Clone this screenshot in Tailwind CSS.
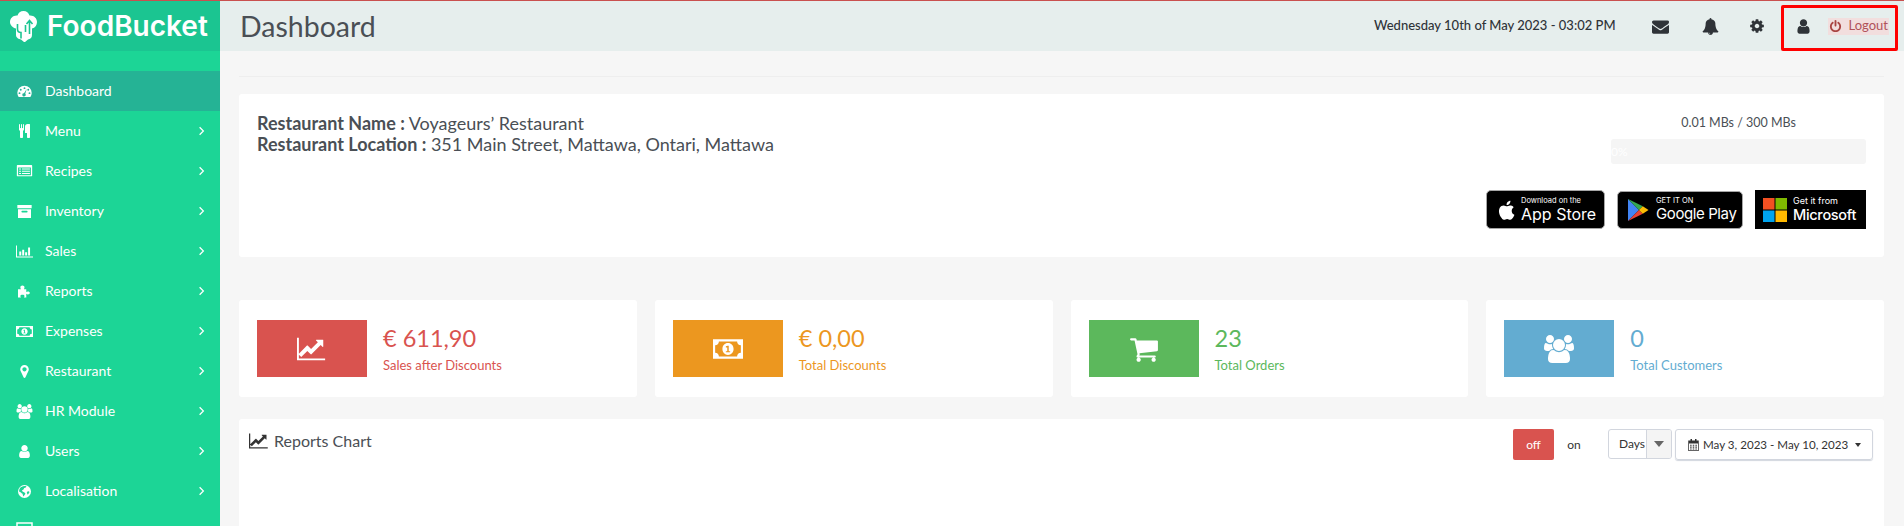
<!DOCTYPE html>
<html lang="en">
<head>
    <meta charset="UTF-8">
    <meta name="viewport" content="width=device-width, initial-scale=1.0">
    <title>FoodBucket - Dashboard</title>
    <script src="https://cdn.jsdelivr.net/npm/@tailwindcss/browser@4"></script>
</head>
<body class="h-[526px] overflow-hidden bg-[#f6f6f6] font-[family-name:Lato,sans-serif] text-[#4a4f55]">
<svg class="hidden">
    <symbol id="i-angle" viewBox="0 0 10 16"><path d="M2 2l6 6-6 6" fill="none" stroke="currentColor" stroke-width="2"/></symbol>
    <symbol id="i-gauge" viewBox="0 0 24 20"><path fill="currentColor" fill-rule="evenodd" d="M12 1a11.500 11.500 0 0 1 11.500 11.500c0 2.500-.8 4.800-2.100 6.500H2.600A11 11 0 0 1 .5 12.500 11.500 11.500 0 0 1 12 1zM12 3.500a1.500 1.500 0 1 0 0 3 1.500 1.500 0 0 0 0-3zM6 6a1.500 1.500 0 1 0 0 3 1.500 1.500 0 0 0 0-3zM18 6a1.500 1.500 0 1 0 0 3 1.500 1.500 0 0 0 0-3zM4 11.500a1.500 1.500 0 1 0 0 3 1.500 1.500 0 0 0 0-3zM20 11.500a1.500 1.500 0 1 0 0 3 1.500 1.500 0 0 0 0-3zM15.500 6.500l-4.300 6.600a2.600 2.600 0 1 0 2 1z"/></symbol>
    <symbol id="i-cutlery" viewBox="0 0 1408 1792"><path fill="currentColor" d="M640 64v640q0 61-35.500 111t-92.500 70v779q0 52-38 90t-90 38h-128q-52 0-90-38t-38-90v-779q-57-20-92.500-70t-35.500-111v-640q0-26 19-45t45-19 45 19 19 45v416q0 26 19 45t45 19 45-19 19-45v-416q0-26 19-45t45-19 45 19 19 45v416q0 26 19 45t45 19 45-19 19-45v-416q0-26 19-45t45-19 45 19 19 45zm768 0v1600q0 52-38 90t-90 38h-128q-52 0-90-38t-38-90v-512h-224q-13 0-22.500-9.500t-9.500-22.500v-800q0-132 94-226t226-94h256q26 0 45 19t19 45z"/></symbol>
    <symbol id="i-list" viewBox="0 0 24 18"><path fill="currentColor" fill-rule="evenodd" d="M1 0h22a1 1 0 0 1 1 1v16a1 1 0 0 1-1 1H1a1 1 0 0 1-1-1V1a1 1 0 0 1 1-1zM2 4v12h20V4zM3.500 5.500h3v1.500h-3zM8 5.500h12.500v1.500H8zM3.500 9h3v1.500h-3zM8 9h12.500v1.500H8zM3.500 12.500h3V14h-3zM8 12.500h12.500V14H8z"/></symbol>
    <symbol id="i-box" viewBox="0 0 22 20"><path fill="currentColor" fill-rule="evenodd" d="M0 0h22v5H0zM1 6.500h20V20H1zM7.500 9a1 1 0 0 0 0 2.500h7a1 1 0 0 0 0-2.500z"/></symbol>
    <symbol id="i-bars" viewBox="0 0 26 18"><path fill="currentColor" d="M0 0h1.500v16.500H26V18H0zM5 9h3v6H5zM9.500 6.500h3V15h-3zM14 10h3v5h-3zM18.500 3h3v12h-3z"/></symbol>
    <symbol id="i-puzzle" viewBox="0 0 24 22"><path fill="currentColor" d="M1 7h5C5.300 6 5 5 5 4c0-1.700 1.500-3 3.500-3S12 2.300 12 4c0 1-.3 2-1 3h4v5c1-.7 1.800-1 2.700-1 1.800 0 3.300 1 3.300 2.500S19.500 16 17.700 16c-.9 0-1.700-.3-2.700-1v6h-4c.6-.8 1-1.500 1-2.300 0-1.300-1.500-2.200-3.500-2.200s-3.500.9-3.500 2.200c0 .8.400 1.500 1 2.300H1z"/></symbol>
    <symbol id="i-money" viewBox="0 0 28 18"><path fill="currentColor" fill-rule="evenodd" d="M0 0h28v18H0zM5.500 2c0 2-1.500 3.500-3.500 3.500v7c2 0 3.500 1.500 3.500 3.500h17c0-2 1.500-3.500 3.500-3.500v-7c-2 0-3.500-1.500-3.500-3.500zM14 3.500c3 0 5.200 2.500 5.200 5.500S17 14.500 14 14.500 8.800 12 8.800 9 11 3.500 14 3.500zM12 6.500v1h1.300V11H12v1h4v-1h-1.300V6h-1z"/></symbol>
    <symbol id="i-marker" viewBox="0 0 1792 1792"><path fill="currentColor" d="M1152 640q0-106-75-181t-181-75-181 75-75 181 75 181 181 75 181-75 75-181zm256 0q0 109-33 179l-364 774q-16 33-47.500 52t-67.500 19-67.500-19-46.500-52l-365-774q-33-70-33-179 0-212 150-362t362-150 362 150 150 362z"/></symbol>
    <symbol id="i-users" viewBox="0 0 1920 1792"><path fill="currentColor" d="M593 896q-162 5-265 128h-134q-82 0-138-40.500t-56-118.500q0-353 124-353 6 0 43.500 21t97.500 42.500 119 21.500q67 0 133-23-5 37-5 66 0 139 81 256zm1071 637q0 120-73 189.500t-194 69.500h-874q-121 0-194-69.500t-73-189.500q0-53 3.500-103.500t14-109 26.500-108.500 43-97.500 62-81 85.500-53.500 111.500-20q10 0 43 21.500t73 48 107 48 135 21.500 135-21.500 107-48 73-48 43-21.500q61 0 111.500 20t85.500 53.500 62 81 43 97.500 26.500 108.500 14 109 3.500 103.500zm-1024-1277q0 106-75 181t-181 75-181-75-75-181 75-181 181-75 181 75 75 181zm704 384q0 159-112.500 271.500t-271.500 112.500-271.500-112.500-112.500-271.500 112.500-271.500 271.500-112.500 271.500 112.500 112.500 271.500zm576 225q0 78-56 118.500t-138 40.500h-134q-103-123-265-128 81-117 81-256 0-29-5-66 66 23 133 23 59 0 119-21.500t97.500-42.500 43.500-21q124 0 124 353zm-128-609q0 106-75 181t-181 75-181-75-75-181 75-181 181-75 181 75 75 181z"/></symbol>
    <symbol id="i-user" viewBox="0 0 1792 1792"><path fill="currentColor" d="M1536 1399q0 109-62.500 187t-150.500 78h-854q-88 0-150.500-78t-62.500-187q0-85 8.500-160.500t31.500-152 58.500-131 94-89 134.500-34.500q131 128 313 128t313-128q76 0 134.500 34.500t94 89 58.500 131 31.500 152 8.500 160.500zm-256-887q0 159-112.500 271.500t-271.500 112.500-271.500-112.500-112.500-271.500 112.500-271.500 271.500-112.500 271.500 112.500 112.500 271.500z"/></symbol>
    <symbol id="i-globe" viewBox="0 0 20 20"><path fill="currentColor" fill-rule="evenodd" d="M10 0a10 10 0 1 1 0 20 10 10 0 0 1 0-20zM3 5c-1 1.500-1.500 3.500-1 5.500 1 .5 2.500.5 3.500 2l1.500 1c.5 1.500.5 3 1.500 4l1-1.500 2-2.500-1.500-2-3-1.500L6 8.500 8.500 7l1-2.500L12 4l1-2c-1-.4-2-.5-3-.5-3 0-5.500 1.500-7 3.500zm11.500 5l-1 2 1.500 3 2.500-3.500-.5-2z"/></symbol>
    <symbol id="i-envelope" viewBox="0 0 1792 1792"><path fill="currentColor" d="M1792 710v794q0 66-47 113t-113 47h-1472q-66 0-113-47t-47-113v-794q44 49 101 87 362 246 497 345 57 42 92.500 65.500t94.500 48 110 24.500h2q51 0 110-24.500t94.500-48 92.500-65.500q170-123 498-345 57-39 100-87zm0-294q0 79-49 151t-122 123q-376 261-468 325-10 7-42.500 30.500t-54 38-52 32.500-57.500 27-50 9h-2q-23 0-50-9t-57.500-27-52-32.500-54-38-42.500-30.500q-91-64-262-182.500t-205-142.500q-62-42-117-115.500t-55-136.500q0-78 41.500-130t118.500-52h1472q65 0 112.500 47t47.500 113z"/></symbol>
    <symbol id="i-bell" viewBox="0 0 1792 1792"><path fill="currentColor" d="M912 1696q0-16-16-16-59 0-101.500-42.500t-42.500-101.500q0-16-16-16t-16 16q0 73 51.500 124.500t124.500 51.500q16 0 16-16zm816-288q0 52-38 90t-90 38h-448q0 106-75 181t-181 75-181-75-75-181h-448q-52 0-90-38t-38-90q50-42 91-88t85-119.500 74.500-158.500 50-206 19.500-260q0-152 117-282.500t307-158.500q-8-19-8-39 0-40 28-68t68-28 68 28 28 68q0 20-8 39 190 28 307 158.500t117 282.500q0 139 19.500 260t50 206 74.500 158.500 85 119.500 91 88z"/></symbol>
    <symbol id="i-cog" viewBox="0 0 1792 1792"><path fill="currentColor" d="M1152 896q0-106-75-181t-181-75-181 75-75 181 75 181 181 75 181-75 75-181zm512-109v222q0 12-8 23t-20 13l-185 28q-19 54-39 91 35 50 107 138 10 12 10 25t-9 23q-27 37-99 108t-94 71q-12 0-26-9l-138-108q-44 23-91 38-16 136-29 186-7 28-36 28h-222q-14 0-24.500-8.500t-11.500-21.500l-28-184q-49-16-90-37l-141 107q-10 9-25 9-14 0-25-11-126-114-165-168-7-10-7-23 0-12 8-23 15-21 51-66.500t54-70.500q-27-50-41-99l-183-27q-13-2-21-12.500t-8-23.500v-222q0-12 8-23t19-13l186-28q14-46 39-92-40-57-107-138-10-12-10-24 0-10 9-23 26-36 98.500-107.500t94.500-71.500q13 0 26 10l138 107q44-23 91-38 16-136 29-186 7-28 36-28h222q14 0 24.500 8.500t11.500 21.500l28 184q49 16 90 37l142-107q9-9 24-9 13 0 25 10 129 119 165 170 7 8 7 22 0 12-8 23-15 21-51 66.500t-54 70.500q26 50 41 98l183 28q13 2 21 12.500t8 23.500z"/></symbol>
    <symbol id="i-power" viewBox="0 0 1792 1792"><path fill="currentColor" d="M1664 896q0 156-61 298t-164 245-245 164-298 61-298-61-245-164-164-245-61-298q0-182 80.500-343t226.500-270q43-32 95.500-25t83.500 50q32 42 24.500 94.500t-49.500 84.500q-98 74-151.500 181t-53.500 228q0 104 40.500 198.500t109.500 163.500 163.500 109.500 198.500 40.500 198.500-40.500 163.500-109.500 109.500-163.500 40.500-198.500q0-121-53.500-228t-151.500-181q-42-32-49.500-84.500t24.500-94.500q31-43 84-50t95 25q146 109 226.500 270t80.500 343zm-640-768v640q0 52-38 90t-90 38-90-38-38-90v-640q0-52 38-90t90-38 90 38 38 90z"/></symbol>
    <symbol id="i-chart" viewBox="0 0 2048 1792"><path fill="currentColor" d="M1920 1536v128h-1920v-1536h128v1408h1792zm-128-1248v435q0 21-19.500 29.500t-35.500-7.500l-121-121-633 633q-10 10-23 10t-23-10l-233-233-416 416-192-192 585-585q10-10 23-10t23 10l233 233 464-464-121-121q-16-16-7.500-35.500t29.500-19.500h435q14 0 23 9t9 23z"/></symbol>
    <symbol id="i-cart" viewBox="0 0 1792 1792"><path fill="currentColor" d="M704 1536q0 52-38 90t-90 38-90-38-38-90 38-90 90-38 90 38 38 90zm896 0q0 52-38 90t-90 38-90-38-38-90 38-90 90-38 90 38 38 90zm128-1088v512q0 24-16.500 42.500t-40.500 21.500l-1044 122q13 60 13 70 0 16-24 64h920q26 0 45 19t19 45-19 45-45 19h-1024q-26 0-45-19t-19-45q0-11 8-31.500t16-36 21.500-40 15.500-29.500l-177-823h-204q-26 0-45-19t-19-45 19-45 45-19h256q16 0 28.500 6.500t19.500 15.500 13 24.500 8 26 5.500 29.500 4.500 26h1201q26 0 45 19t19 45z"/></symbol>
    <symbol id="i-calendar" viewBox="0 0 14 16"><path fill="currentColor" fill-rule="evenodd" d="M3 0h2v2h4V0h2v2h3v14H0V2h3zM1 6v9h12V6zM2.500 7.500h2v1.500h-2zM6 7.500h2v1.500H6zM9.500 7.500h2v1.500h-2zM2.500 10h2v1.500h-2zM6 10h2v1.500H6zM9.500 10h2v1.500h-2zM2.500 12.500h2V14h-2zM6 12.500h2V14H6zM9.500 12.500h2V14h-2z"/></symbol>
</svg>

<div class="h-px bg-[#c9504f]"></div>
<div class="flex h-[525px] overflow-hidden">
    <!-- sidebar -->
    <aside class="h-[525px] w-[220px] shrink-0 overflow-hidden bg-[#1cd596] text-white">
        <div class="flex h-[50px] items-center gap-[10px] bg-[#1bc591] pl-[10px]">
            <svg class="h-[31px] w-[27px] shrink-0" viewBox="0 0 27 31">
                <path fill="#fff" d="M13.500 0c3 0 5.300 1.800 6 4.500 4-.5 7.500 2.500 7.500 6.500 0 3.200-2 5.800-5 6.500v6.500c0 3-2 4-4 4.500l-3 2.500h-1l-3-2.500c-2-.5-5-1.500-5-4.500v-6.500c-3-.7-6-3.300-6-6.500 0-4 3.500-7 7.500-6.500C8.200 1.800 10.500 0 13.500 0z"/>
                <path fill="none" stroke="#1bc591" stroke-width="1.600" d="M7.500 13v5c0 2.500 2 3.500 3.500 3.500v6M19.500 10v13M16.500 13l3-3.500 3 3.500M15.500 14v7"/>
            </svg>
            <span class="text-[28px] leading-none font-semibold font-[family-name:Inter,sans-serif]">FoodBucket</span>
        </div>
        <nav class="mt-5 text-sm">
            <a class="flex h-10 items-center bg-[#25b395] pl-4"><svg class="mr-[12px] h-[12.500px] w-[17px]"><use href="#i-gauge"/></svg>Dashboard</a>
            <a class="flex h-10 items-center pr-[15px] pl-4"><svg class="mr-[12px] h-[14px] w-[17px]"><use href="#i-cutlery"/></svg>Menu<svg class="ml-auto h-[10px] w-[7px]"><use href="#i-angle"/></svg></a>
            <a class="flex h-10 items-center pr-[15px] pl-4"><svg class="mr-[12px] h-[11.500px] w-[17px]"><use href="#i-list"/></svg>Recipes<svg class="ml-auto h-[10px] w-[7px]"><use href="#i-angle"/></svg></a>
            <a class="flex h-10 items-center pr-[15px] pl-4"><svg class="mr-[12px] h-[13px] w-[17px]"><use href="#i-box"/></svg>Inventory<svg class="ml-auto h-[10px] w-[7px]"><use href="#i-angle"/></svg></a>
            <a class="flex h-10 items-center pr-[15px] pl-4"><svg class="mr-[12px] h-[15px] w-[17px]"><use href="#i-bars"/></svg>Sales<svg class="ml-auto h-[10px] w-[7px]"><use href="#i-angle"/></svg></a>
            <a class="flex h-10 items-center pr-[15px] pl-4"><svg class="mr-[12px] h-[13px] w-[17px]"><use href="#i-puzzle"/></svg>Reports<svg class="ml-auto h-[10px] w-[7px]"><use href="#i-angle"/></svg></a>
            <a class="flex h-10 items-center pr-[15px] pl-4"><svg class="mr-[12px] h-[15px] w-[17px]"><use href="#i-money"/></svg>Expenses<svg class="ml-auto h-[10px] w-[7px]"><use href="#i-angle"/></svg></a>
            <a class="flex h-10 items-center pr-[15px] pl-4"><svg class="mr-[12px] h-[15px] w-[17px]"><use href="#i-marker"/></svg>Restaurant<svg class="ml-auto h-[10px] w-[7px]"><use href="#i-angle"/></svg></a>
            <a class="flex h-10 items-center pr-[15px] pl-4"><svg class="mr-[12px] h-[15px] w-[17px]"><use href="#i-users"/></svg>HR Module<svg class="ml-auto h-[10px] w-[7px]"><use href="#i-angle"/></svg></a>
            <a class="flex h-10 items-center pr-[15px] pl-4"><svg class="mr-[12px] h-[15px] w-[17px]"><use href="#i-user"/></svg>Users<svg class="ml-auto h-[10px] w-[7px]"><use href="#i-angle"/></svg></a>
            <a class="flex h-10 items-center pr-[15px] pl-4"><svg class="mr-[12px] h-[13px] w-[17px]"><use href="#i-globe"/></svg>Localisation<svg class="ml-auto h-[10px] w-[7px]"><use href="#i-angle"/></svg></a>
            <a class="flex h-[15px] items-end pr-[15px] pl-4"><svg class="h-[4px] w-[17px] overflow-hidden" viewBox="0 0 17 4" preserveAspectRatio="none"><path fill="none" stroke="#fff" stroke-width="1.500" d="M1 4V1h15v3"/></svg></a>
        </nav>
    </aside>

    <main class="min-w-0 flex-1">
        <!-- top bar -->
        <header class="relative flex h-[50px] items-center bg-[#e6eeed] pl-[20px]">
            <h1 class="text-[28.500px] leading-none text-[#4a4f55]">Dashboard</h1>
            <div class="ml-auto flex items-center text-[#2f3338]">
                <span class="text-[13px] font-medium">Wednesday 10th of May 2023 - 03:02 PM</span>
                <svg class="ml-[36px] h-[17px] w-[17px]"><use href="#i-envelope"/></svg>
                <svg class="ml-[33px] h-[17px] w-[17px]"><use href="#i-bell"/></svg>
                <svg class="ml-[30px] h-[16px] w-[16px]"><use href="#i-cog"/></svg>
                <svg class="ml-[30px] h-[17px] w-[17px]"><use href="#i-user"/></svg>
                <span class="mr-[15px] ml-[16px] flex h-[17px] items-center gap-[7px] bg-[#f2dede] pr-px pl-px text-[13px] text-[#b0525a]"><svg class="h-[13px] w-[13px] text-[#a94442]"><use href="#i-power"/></svg>Logout</span>
            </div>
            <div class="absolute top-[4px] right-[6px] h-[46px] w-[117px] rounded-[2px] border-[3px] border-[#f00]"></div>
        </header>

        <div class="pr-[20px] pl-[19px]">
            <hr class="mt-[25px] border-[#eeeeee]">

            <!-- restaurant info -->
            <section class="mt-[17px] flex h-[163px] rounded-[3px] bg-white pt-[19px] pr-[18px] pl-[18px]">
                <div class="text-[18px] leading-[21px] text-[#4a4f55]">
                    <p><b class="font-bold">Restaurant Name :</b> Voyageurs’ Restaurant</p>
                    <p><b class="font-bold">Restaurant Location :</b> 351 Main Street, Mattawa, Ontari, Mattawa</p>
                </div>
                <div class="ml-auto flex flex-col items-end">
                    <div class="w-[255px] text-center text-[12.500px] leading-[20px]">0.01 MBs / 300 MBs</div>
                    <div class="mt-[6px] h-[25px] w-[255px] rounded-[3px] bg-[#f5f5f5] text-xs leading-[25px] text-white">0%</div>
                    <div class="mt-[26px] flex items-center gap-[12px]">
                        <div class="flex h-[39px] w-[119px] items-center gap-[6px] rounded-[5px] border border-[#a6a6a6] bg-black pl-[9px] text-white">
                            <svg class="h-[24px] w-[19px]" viewBox="0 0 19 24"><path fill="#fff" d="M15.700 12.700c0-2.300 1.900-3.400 2-3.500-1.100-1.600-2.800-1.800-3.400-1.800-1.400-.1-2.800.9-3.500.9-.7 0-1.900-.9-3.100-.9-1.600 0-3 .9-3.900 2.300-1.700 2.900-.4 7.200 1.200 9.600.8 1.200 1.800 2.500 3 2.400 1.200 0 1.700-.8 3.100-.8s1.900.8 3.100.8c1.300 0 2.100-1.200 2.900-2.300.9-1.300 1.300-2.600 1.300-2.700 0 0-2.700-.9-2.700-4zM13.500 5.700c.6-.8 1.100-1.900.9-3-.9 0-2.100.6-2.800 1.400-.6.7-1.100 1.800-1 2.900 1.100.1 2.200-.5 2.900-1.300z"/></svg>
                            <div class="font-[family-name:Inter,sans-serif]"><div class="text-[7.500px] leading-[9px] whitespace-nowrap">Download on the</div><div class="text-[16px] leading-[19px] font-normal whitespace-nowrap">App Store</div></div>
                        </div>
                        <div class="flex h-[38px] w-[126px] items-center gap-[7px] rounded-[5px] border border-[#a6a6a6] bg-black pl-[9px] text-white">
                            <svg class="h-[24px] w-[22px]" viewBox="0 0 22 24"><path fill="#4285f4" d="M1 1v22l11-11z"/><path fill="#34a853" d="M1 1l11 11 3.800-3.800z"/><path fill="#ea4335" d="M1 23l11-11 3.800 3.800z"/><path fill="#fbbc04" d="M15.800 8.200L12 12l3.800 3.800L21.500 12z"/></svg>
                            <div class="font-[family-name:Inter,sans-serif]"><div class="text-[7.500px] leading-[9px] whitespace-nowrap">GET IT ON</div><div class="text-[15px] leading-[18px] font-normal tracking-[-0.4px] whitespace-nowrap">Google Play</div></div>
                        </div>
                        <div class="flex h-[39px] w-[111px] items-center gap-[6px] bg-black pl-[8px] text-white">
                            <svg class="h-[24px] w-[24px]" viewBox="0 0 24 24"><path fill="#f25022" d="M0 0h11.500v11.500H0z"/><path fill="#7fba00" d="M12.500 0H24v11.500H12.500z"/><path fill="#00a4ef" d="M0 12.500h11.500V24H0z"/><path fill="#ffb900" d="M12.500 12.500H24V24H12.500z"/></svg>
                            <div class="font-[family-name:Inter,sans-serif]"><div class="text-[9px] leading-[10px] whitespace-nowrap">Get it from</div><div class="text-[14.500px] leading-[18px] font-medium tracking-[-0.3px] whitespace-nowrap">Microsoft</div></div>
                        </div>
                    </div>
                </div>
            </section>

            <!-- stats -->
            <section class="mt-[43px] grid grid-cols-4 gap-[18px]">
                <div class="flex h-[97px] items-center rounded-[3px] bg-white pl-[18px]">
                    <div class="flex h-[57px] w-[110px] items-center justify-center bg-[#d9534f] text-white"><svg class="h-[30px] w-[30px]"><use href="#i-chart"/></svg></div>
                    <div class="ml-[16px] text-[#d9534f]"><div class="mt-px text-[23.500px] leading-[28px]">€ 611,90</div><div class="mt-[4px] text-[13px] leading-[18px]">Sales after Discounts</div></div>
                </div>
                <div class="flex h-[97px] items-center rounded-[3px] bg-white pl-[18px]">
                    <div class="flex h-[57px] w-[110px] items-center justify-center bg-[#ec971f] text-white"><svg class="h-[30px] w-[30px]"><use href="#i-money"/></svg></div>
                    <div class="ml-[16px] text-[#ec971f]"><div class="mt-px text-[23.500px] leading-[28px]">€ 0,00</div><div class="mt-[4px] text-[13px] leading-[18px]">Total Discounts</div></div>
                </div>
                <div class="flex h-[97px] items-center rounded-[3px] bg-white pl-[18px]">
                    <div class="flex h-[57px] w-[110px] items-center justify-center bg-[#5cb85c] text-white"><svg class="h-[30px] w-[30px]"><use href="#i-cart"/></svg></div>
                    <div class="ml-[16px] text-[#5cb85c]"><div class="mt-px text-[23.500px] leading-[28px]">23</div><div class="mt-[4px] text-[13px] leading-[18px]">Total Orders</div></div>
                </div>
                <div class="flex h-[97px] items-center rounded-[3px] bg-white pl-[18px]">
                    <div class="flex h-[57px] w-[110px] items-center justify-center bg-[#63acd1] text-white"><svg class="h-[30px] w-[30px]"><use href="#i-users"/></svg></div>
                    <div class="ml-[16px] text-[#63acd1]"><div class="mt-px text-[23.500px] leading-[28px]">0</div><div class="mt-[4px] text-[13px] leading-[18px]">Total Customers</div></div>
                </div>
            </section>

            <!-- chart -->
            <section class="mt-[22px] flex h-[107px] items-start rounded-t-[3px] bg-white pt-[10px] pr-[11px] pl-[10px]">
                <h2 class="flex items-center gap-[5px] pt-[1px] text-base leading-[22px] text-[#4a4f55]"><svg class="h-[18px] w-[20px] text-[#333]"><use href="#i-chart"/></svg>Reports Chart</h2>
                <div class="ml-auto flex items-start text-xs text-[#333]">
                    <span class="flex h-[31px] w-[41px] items-center justify-center rounded-[2px] bg-[#d9534f] text-white">off</span>
                    <span class="flex h-[31px] w-[54px] items-center justify-center pr-[14px]">on</span>
                    <span class="flex h-[30px] w-[64px] overflow-hidden rounded-[3px] border border-[#d2d6de]">
                        <span class="flex flex-1 items-center pl-[10px]">Days</span>
                        <span class="flex w-[25px] items-center justify-center border-l border-[#d2d6de] bg-[#f4f4f4]"><span class="border-x-[5px] border-t-[6px] border-x-transparent border-t-[#666]"></span></span>
                    </span>
                    <span class="ml-[3px] flex h-[31px] w-[198px] items-center gap-[4px] rounded-[3px] border border-[#d2d6de] pl-[12px] text-[11.600px] shadow-[0_1px_1px_#d2d6de]"><svg class="h-[12px] w-[11px]"><use href="#i-calendar"/></svg>May 3, 2023 - May 10, 2023<span class="ml-[3px] border-x-[3.500px] border-t-[4px] border-x-transparent border-t-[#333]"></span></span>
                </div>
            </section>
        </div>
    </main>
</div>
</body>
</html>
